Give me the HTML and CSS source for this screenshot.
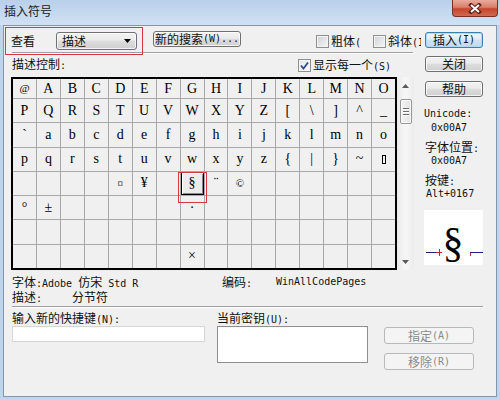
FILE: index.html
```html
<!DOCTYPE html>
<html lang="zh-CN">
<head>
<meta charset="utf-8">
<title>插入符号</title>
<link rel="stylesheet" href="styles.css">
</head>
<body>
<div class="window">
  <div class="titlebar">
    <div class="title">插入符号</div>
    <div class="close">
      <svg width="14" height="11" viewBox="0 0 14 11"><path d="M3 2 L11 9 M11 2 L3 9" stroke="#5b211a" stroke-width="4" stroke-linecap="square"/><path d="M3 2 L11 9 M11 2 L3 9" stroke="#fff" stroke-width="2"/></svg>
    </div>
  </div>
  <div class="client">
    <div class="upper">
      <div class="main">
        <div class="toprow">
          <span class="lbl-view">查看</span>
          <div class="combo"><span>描述</span><svg width="7" height="4" viewBox="0 0 7 4"><path d="M0 0 L7 0 L3.5 4z" fill="#000"/></svg></div>
          <div class="btn btn-search">新的搜索<span class="m">(W)...</span></div>
          <div class="chk chk-bold"><span class="box"></span><span>粗体<span class="m">(</span></span></div>
          <div class="chk chk-italic"><span class="box"></span><span>斜体<span class="m">(I)</span></span></div>
        </div>
        <div class="sep sep-top"></div>
        <div class="row2">
          <span class="desc">描述控制<span class="m">:</span></span>
          <div class="chk chk-show"><span class="box checked"><svg width="11" height="11" viewBox="0 0 11 11"><path d="M2 5.5 L4.5 8.5 L9 2.5" fill="none" stroke="#2b4d8c" stroke-width="1.8"/></svg></span><span>显示每一个<span class="m">(S)</span></span></div>
        </div>
        <div class="charmap">
          <div class="grid">
            <span class="small">@</span><span>A</span><span>B</span><span>C</span><span>D</span><span>E</span><span>F</span><span>G</span><span>H</span><span>I</span><span>J</span><span>K</span><span>L</span><span>M</span><span>N</span><span>O</span>
            <span>P</span><span>Q</span><span>R</span><span>S</span><span>T</span><span>U</span><span>V</span><span>W</span><span>X</span><span>Y</span><span>Z</span><span>[</span><span>\</span><span>]</span><span>^</span><span>_</span>
            <span>`</span><span>a</span><span>b</span><span>c</span><span>d</span><span>e</span><span>f</span><span>g</span><span>h</span><span>i</span><span>j</span><span>k</span><span>l</span><span>m</span><span>n</span><span>o</span>
            <span>p</span><span>q</span><span>r</span><span>s</span><span>t</span><span>u</span><span>v</span><span>w</span><span>x</span><span>y</span><span>z</span><span>{</span><span>|</span><span>}</span><span>~</span><span><b class="del"></b></span>
            <span></span><span></span><span></span><span></span><span class="small">¤</span><span>¥</span><span></span><span class="sel">§</span><span>¨</span><span class="small">©</span><span></span><span></span><span></span><span></span><span></span><span></span>
            <span>°</span><span>±</span><span></span><span></span><span></span><span></span><span></span><span>·</span><span></span><span></span><span></span><span></span><span></span><span></span><span></span><span></span>
            <span></span><span></span><span></span><span></span><span></span><span></span><span></span><span></span><span></span><span></span><span></span><span></span><span></span><span></span><span></span><span></span>
            <span></span><span></span><span></span><span></span><span></span><span></span><span></span><span>×</span><span></span><span></span><span></span><span></span><span></span><span></span><span></span><span></span>
          </div>
          <div class="scrollbar">
            <div class="sb-btn"><svg width="7" height="4" viewBox="0 0 7 4"><path d="M0 4 L3.5 0 L7 4z" fill="#5a5a5a"/></svg></div>
            <div class="thumb"><i></i><i></i><i></i></div>
            <div class="sb-space"></div>
            <div class="sb-btn"><svg width="7" height="4" viewBox="0 0 7 4"><path d="M0 0 L7 0 L3.5 4z" fill="#5a5a5a"/></svg></div>
          </div>
        </div>
        <div class="info">
          <div class="info-row"><span class="c1">字体<span class="m">:Adobe </span>仿宋<span class="m"> Std R</span></span><span class="c2">编码<span class="m">:</span></span><span class="m">WinAllCodePages</span></div>
          <div class="info-row row-b"><span class="c1b">描述<span class="m">:</span></span><span>分节符</span></div>
        </div>
        <div class="annot annot-top"></div>
        <div class="annot annot-cell"></div>
      </div>
      <div class="side">
        <div class="btn btn-default b-insert">插入<span class="m">(I)</span></div>
        <div class="btn b-close">关闭</div>
        <div class="btn b-help">帮助</div>
        <div class="slbl m s-first">Unicode:</div>
        <div class="sval m">0x00A7</div>
        <div class="slbl s-next">字体位置<span class="m">:</span></div>
        <div class="sval m">0x00A7</div>
        <div class="slbl s-next">按键<span class="m">:</span></div>
        <div class="sval m s-alt">Alt+0167</div>
        <div class="preview">
          <svg width="59" height="55" viewBox="0 0 59 55">
            <line x1="2" y1="42.5" x2="12" y2="42.5" stroke="#1a237e" stroke-width="1"/>
            <line x1="12" y1="42.5" x2="18" y2="42.5" stroke="#c62828" stroke-width="1"/>
            <line x1="15.5" y1="39" x2="15.5" y2="46" stroke="#c62828" stroke-width="1"/>
            <text x="29" y="47" text-anchor="middle" class="pv-glyph">§</text>
            <line x1="46.5" y1="42" x2="46.5" y2="46" stroke="#b23a3a" stroke-width="1"/>
            <line x1="46" y1="42.5" x2="59" y2="42.5" stroke="#1a237e" stroke-width="1"/>
          </svg>
        </div>
      </div>
    </div>
    <div class="bottom">
      <div class="sep sep-bottom"></div>
      <div class="bottom-row">
        <div class="col1">
          <div class="field-lbl">输入新的快捷键<span class="m">(N):</span></div>
          <div class="input"></div>
        </div>
        <div class="col2">
          <div class="field-lbl">当前密钥<span class="m">(U):</span></div>
          <div class="textarea"></div>
        </div>
        <div class="col3">
          <div class="btn btn-dis b-assign">指定<span class="m">(A)</span></div>
          <div class="btn btn-dis b-remove">移除<span class="m">(R)</span></div>
        </div>
      </div>
    </div>
  </div>
</div>
</body>
</html>
```

FILE: styles.css
```css
* { box-sizing: border-box; }
html, body { margin: 0; padding: 0; }
body {
  width: 500px;
  height: 399px;
  overflow: hidden;
  background: #bfd5ed;
  font: 12px/14px "Noto Sans CJK SC", sans-serif;
  color: #111;
}
.m { font-family: "DejaVu Sans Mono", "Liberation Mono", monospace; font-size: 10px; }

.window { display: flex; flex-direction: column; height: 399px; }

.titlebar {
  height: 25px;
  display: flex;
  justify-content: space-between;
  align-items: flex-start;
  background: linear-gradient(#b9d0ea, #d0e1f3);
}
.title { padding: 4px 0 0 4px; line-height: 14px; color: #1b1b1b; }
.close {
  width: 46px;
  height: 17px;
  margin-right: 2px;
  border: 1px solid #7a3026;
  border-top: none;
  border-radius: 0 0 4px 4px;
  background: linear-gradient(#e9aa9b, #d8806b 45%, #c5452c 55%, #d06a4f);
  display: flex;
  align-items: center;
  justify-content: center;
}

.client {
  height: 372px;
  margin: 0 3px;
  border: 1px solid #8596ab;
  background: #f0f0f0;
  display: flex;
  flex-direction: column;
}
.upper { display: flex; }
.main { position: relative; width: 416px; margin-left: 1px; }

.toprow {
  display: flex;
  align-items: flex-start;
  height: 25px;
  margin-top: 1px;
  overflow: hidden;
  white-space: nowrap;
}
.lbl-view { width: 51px; padding-left: 6px; margin-top: 7px; flex: none; }

.btn {
  display: flex;
  align-items: center;
  justify-content: center;
  border: 1px solid #707070;
  border-radius: 3px;
  background: linear-gradient(#f2f2f2 0%, #ebebeb 45%, #dddddd 50%, #cfcfcf 100%);
  box-shadow: inset 0 0 0 1px rgba(255, 255, 255, 0.75);
  line-height: 14px;
  white-space: nowrap;
  flex: none;
}
.btn-default {
  border-color: #3c7fb1;
  background: linear-gradient(#eef6fc 0%, #e0ecf6 45%, #d0e2f1 50%, #c3d9ec 100%);
  box-shadow: inset 0 0 0 1px #a9dbf6;
}
.btn-dis {
  border-color: #b5b9bc;
  background: #f4f4f4;
  color: #8a8a8a;
  box-shadow: none;
}

.combo {
  width: 81px;
  height: 18px;
  margin-top: 5px;
  flex: none;
  display: flex;
  align-items: center;
  justify-content: space-between;
  padding: 0 5px;
  border: 1px solid #707070;
  border-radius: 3px;
  background: linear-gradient(#f2f2f2 0%, #ebebeb 45%, #dddddd 50%, #cfcfcf 100%);
  box-shadow: inset 0 0 0 1px rgba(255, 255, 255, 0.75);
}
.btn-search { width: 88px; height: 16px; margin-left: 16px; margin-top: 4px; }

.chk { display: flex; align-items: center; gap: 2px; height: 13px; flex: none; white-space: nowrap; }
.box {
  width: 13px;
  height: 13px;
  flex: none;
  border: 1px solid #8e8f8f;
  background: linear-gradient(135deg, #cfd2d7, #f6f6f6);
  box-shadow: inset 0 0 0 1px #f4f4f4;
  display: flex;
  align-items: center;
  justify-content: center;
}
.box.checked { background: linear-gradient(135deg, #e3e5e9, #fbfbfb); }
.chk-bold { margin-left: 75px; margin-top: 8px; }
.chk-italic { margin-left: 12px; margin-top: 8px; }

.sep { height: 2px; border-top: 1px solid #a0a0a0; border-bottom: 1px solid #ffffff; }
.sep-top { margin-left: 7px; width: 401px; }

.row2 { display: flex; align-items: flex-start; height: 23px; }
.desc { width: 286px; margin-left: 7px; margin-top: 3px; height: 14px; flex: none; }
.chk-show { margin-top: 5px; }

.charmap { display: flex; height: 193px; margin-left: 6px; }
.grid {
  width: 386px;
  height: 193px;
  flex: none;
  border: 2px solid #000;
  background: #a8a8a8;
  display: grid;
  grid-template-columns: repeat(16, 1fr);
  grid-template-rows: 19px repeat(7, 1fr);
  gap: 1px;
}
.grid span {
  background: #f0f0f0;
  display: flex;
  align-items: center;
  justify-content: center;
  font: 14px/1 "Liberation Serif", serif;
  color: #000;
}
.grid span.small { font-size: 11px; }
.grid span.sel {
  background: #ececec;
  box-shadow: inset 0 0 0 1px #000, inset 2px 2px 0 0 #fff, inset -2px -2px 0 0 #8a8a8a;
}
.del { display: block; width: 4px; height: 9px; border: 1px solid #000; }

.scrollbar {
  width: 17px;
  flex: none;
  display: flex;
  flex-direction: column;
  background: linear-gradient(to right, #e9e9e9, #f5f5f5 40%, #f5f5f5 60%, #ebebeb);
}
.sb-btn { height: 17px; display: flex; align-items: center; justify-content: center; flex: none; }
.thumb {
  height: 25px;
  margin: 5px 2px 0 3px;
  border: 1px solid #979797;
  border-radius: 2px;
  background: linear-gradient(to right, #f4f4f4, #e3e3e3);
  box-shadow: inset 0 0 0 1px #fbfbfb;
  display: flex;
  flex-direction: column;
  justify-content: center;
  align-items: center;
  gap: 1px;
  flex: none;
}
.thumb i { display: block; width: 6px; height: 2px; border-top: 1px solid #6f6f6f; border-bottom: 1px solid #fff; }
.sb-space { flex: 1; }

.info { margin-top: 5px; margin-left: 7px; }
.info-row { display: flex; height: 14px; line-height: 14px; white-space: nowrap; }
.info-row.row-b { margin-top: 1px; height: 13px; }
.c1 { width: 210px; flex: none; }
.c2 { width: 54px; flex: none; }
.c1b { width: 60px; flex: none; }

.annot { position: absolute; border: 1px solid #d23a43; pointer-events: none; }
.annot-top { left: 0; top: 1px; width: 138px; height: 28px; }
.annot-cell { left: 173px; top: 146px; width: 29px; height: 31px; }

.side { width: 59px; margin-left: 3px; display: flex; flex-direction: column; flex: none; }
.side .btn { width: 58px; height: 16px; margin-left: 1px; }
.b-insert { margin-top: 6px; }
.b-close { margin-top: 8px; }
.b-help { margin-top: 9px; }
.slbl, .sval { height: 14px; line-height: 14px; white-space: nowrap; }
.s-first { margin-top: 10px; }
.s-next { margin-top: 5px; padding-left: 1px; }
.sval { padding-left: 7px; }
.sval.s-alt { padding-left: 2px; }
.preview { width: 59px; height: 55px; margin-top: 9px; background: #fff; overflow: hidden; }
.preview svg { display: block; }
.pv-glyph { font: 42px "Liberation Serif", serif; fill: #000; }

.bottom { margin-top: 3px; }
.sep-bottom { margin-left: 8px; width: 471px; }
.bottom-row { display: flex; }
.col1 { margin-left: 8px; width: 193px; flex: none; }
.col2 { margin-left: 12px; width: 152px; flex: none; }
.col3 { margin-left: 15px; width: 90px; flex: none; }
.field-lbl { margin-top: 3px; height: 14px; line-height: 14px; white-space: nowrap; }
.input { margin-top: 1px; height: 16px; border: 1px solid #d6d6d6; background: #fff; }
.textarea { margin-top: 1px; width: 151px; height: 37px; border: 1px solid #8f8f8f; background: #fff; }
.col3 .btn { width: 90px; height: 17px; }
.b-assign { margin-top: 19px; }
.b-remove { margin-top: 9px; }
```
